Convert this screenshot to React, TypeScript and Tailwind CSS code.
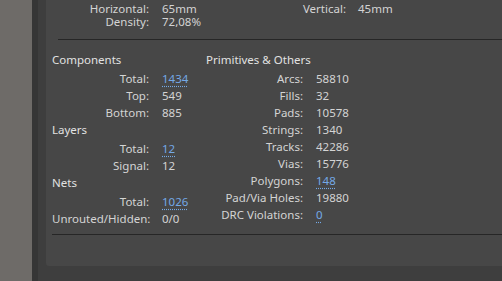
import React from "react";

type Row = { label: string; value: string; link?: boolean };

const leftGroups: { title: string; rows: Row[] }[] = [
  {
    title: "Components",
    rows: [
      { label: "Total:", value: "1434", link: true },
      { label: "Top:", value: "549" },
      { label: "Bottom:", value: "885" },
    ],
  },
  {
    title: "Layers",
    rows: [
      { label: "Total:", value: "12", link: true },
      { label: "Signal:", value: "12" },
    ],
  },
  {
    title: "Nets",
    rows: [
      { label: "Total:", value: "1026", link: true },
      { label: "Unrouted/Hidden:", value: "0/0" },
    ],
  },
];

const primitives: Row[] = [
  { label: "Arcs:", value: "58810" },
  { label: "Fills:", value: "32" },
  { label: "Pads:", value: "10578" },
  { label: "Strings:", value: "1340" },
  { label: "Tracks:", value: "42286" },
  { label: "Vias:", value: "15776" },
  { label: "Polygons:", value: "148", link: true },
  { label: "Pad/Via Holes:", value: "19880" },
  { label: "DRC Violations:", value: "0", link: true },
];

const Value = ({ row }: { row: Row }) =>
  row.link ? (
    <span className="text-[#74a9e6] underline decoration-dotted decoration-[#74a9e6] underline-offset-[3px]">
      {row.value}
    </span>
  ) : (
    <span>{row.value}</span>
  );

const StatRow = ({ row }: { row: Row }) => (
  <div className="flex h-[17px] items-center">
    <span className="w-[97px] text-right whitespace-nowrap">{row.label}</span>
    <span className="ml-[13px] whitespace-nowrap">
      <Value row={row} />
    </span>
  </div>
);

export default function App() {
  return (
    <div
      className="flex h-[281px] w-[502px] overflow-hidden bg-[#3e3e3e] text-[11.5px] text-[#d4d4d4]"
      style={{ fontFamily: '"Noto Sans", "Open Sans", sans-serif' }}
    >
      {/* left edge strips */}
      <div className="w-[32px] shrink-0 bg-[#6e6b68]" />
      <div className="w-[6px] shrink-0 bg-[#363636]" />
      <div className="w-[8px] shrink-0 bg-[#3e3e3e]" />

      {/* main panel */}
      <div className="flex h-[266px] flex-1 flex-col rounded-bl-[3px] bg-[#474747] pl-[6px]">
        {/* top dimension rows */}
        <div className="flex pt-[2px] leading-[13px]">
          <div className="flex w-[230px] flex-col">
            <div className="flex h-[13px]">
              <span className="w-[97px] text-right">Horizontal:</span>
              <span className="ml-[13px]">65mm</span>
            </div>
            <div className="flex h-[13px]">
              <span className="w-[97px] text-right">Density:</span>
              <span className="ml-[13px]">72,08%</span>
            </div>
          </div>
          <div className="flex h-[13px]">
            <span className="w-[64px] text-right">Vertical:</span>
            <span className="ml-[12px]">45mm</span>
          </div>
        </div>

        <div className="mt-[11px] ml-[6px] h-px bg-[#262626]" />

        {/* stats */}
        <div className="mt-[11px] flex">
          <div className="flex w-[154px] flex-col">
            {leftGroups.map((g) => (
              <div key={g.title} className="flex flex-col">
                <div className="mb-[2px] h-[17px] leading-[17px] text-[#e2e2e2]">{g.title}</div>
                {g.rows.map((r) => (
                  <StatRow key={g.title + r.label} row={r} />
                ))}
              </div>
            ))}
          </div>
          <div className="flex flex-col">
            <div className="mb-[2px] h-[17px] leading-[17px] text-[#e2e2e2]">Primitives &amp; Others</div>
            {primitives.map((r) => (
              <StatRow key={r.label} row={r} />
            ))}
          </div>
        </div>

        <div className="mt-[7px] h-px bg-[#262626]" />
      </div>
    </div>
  );
}
